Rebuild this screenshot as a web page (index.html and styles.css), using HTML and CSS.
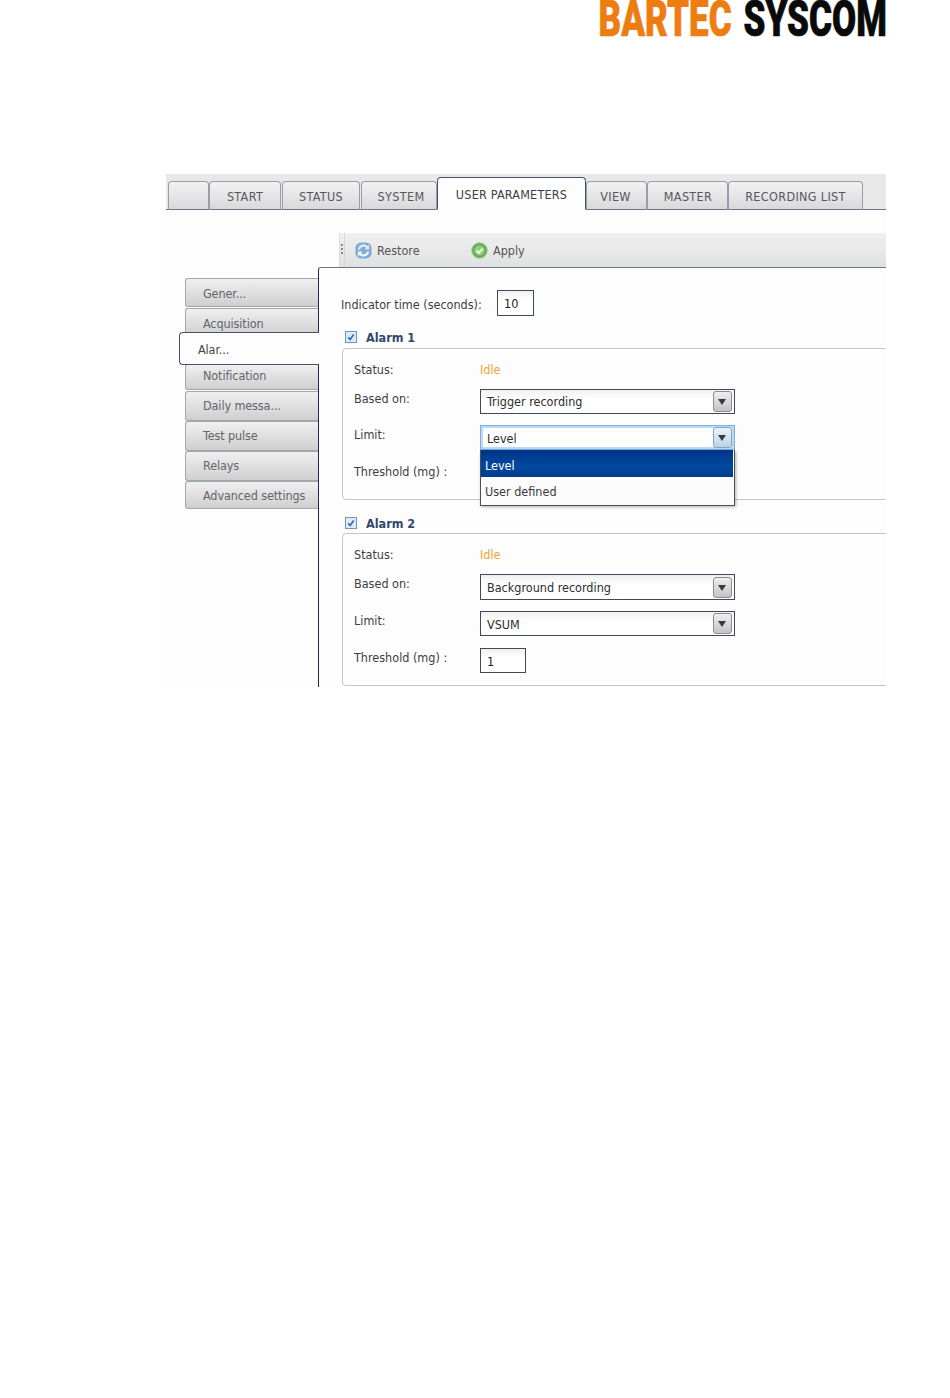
FILE: index.html
```html
<!DOCTYPE html>
<html lang="en">
<head>
<meta charset="utf-8">
<title>BARTEC SYSCOM - User parameters</title>
<link rel="stylesheet" href="styles.css">
</head>
<body>
<div class="page">
  <header class="brand"><div class="brand-text"><span class="brand-a">BARTEC</span><span class="brand-b">SYSCOM</span></div></header>
  <div class="app">
    <nav class="tabs">
      <div class="tab t-home"></div>
      <div class="tab t-start">START</div>
      <div class="tab t-status">STATUS</div>
      <div class="tab t-system">SYSTEM</div>
      <div class="tab active">USER PARAMETERS</div>
      <div class="tab t-view">VIEW</div>
      <div class="tab t-master">MASTER</div>
      <div class="tab t-list">RECORDING LIST</div>
    </nav>
    <div class="toolbar-row">
      <div class="toolbar">
        <span class="grip"></span>
        <span class="tool tool-restore">
          <svg class="tool-icon" viewBox="0 0 18 18"><rect x="0.5" y="0.5" width="17" height="17" rx="6" fill="#7ea9d2"/><path d="M3 8.2A6 6 0 0 1 13.2 4.2L15 2.6V8H9.8l1.7-1.9A3.6 3.6 0 0 0 5.4 8.2z" fill="#dfeaf5"/><path d="M15 10A6 6 0 0 1 4.8 13.8L3 15.4V10h5.2l-1.7 1.9a3.6 3.6 0 0 0 6.1-1.9z" fill="#f0f5fa"/></svg>
          Restore
        </span>
        <span class="tool tool-apply">
          <svg class="tool-icon" viewBox="0 0 18 18"><circle cx="9" cy="9" r="8.2" fill="#66ad55" stroke="#9ccb8e" stroke-width="1"/><circle cx="9" cy="9" r="5.4" fill="#93cf7c"/><path d="M5.8 9.2l2.4 2.3 4.1-4.5" fill="none" stroke="#f4fbf0" stroke-width="2"/></svg>
          Apply
        </span>
      </div>
    </div>
    <div class="workspace">
      <aside class="side">
        <div class="side-tab s-general">Gener...</div>
        <div class="side-tab s-acq">Acquisition</div>
        <div class="side-tab side-active">Alar...</div>
        <div class="side-tab s-notif">Notification</div>
        <div class="side-tab">Daily messa...</div>
        <div class="side-tab">Test pulse</div>
        <div class="side-tab">Relays</div>
        <div class="side-tab s-last">Advanced settings</div>
      </aside>
      <main class="panel">
        <div class="indicator">
          <span class="indicator-label">Indicator time (seconds):</span>
          <span class="input input-ind">10</span>
        </div>
        <section class="alarm alarm-1">
          <h2 class="alarm-title"><span class="check"><svg viewBox="0 0 12 12"><path d="M2.6 6.4l2.4 2.6 4.2-6" fill="none" stroke="#1f6fc0" stroke-width="2"/></svg></span>Alarm 1</h2>
          <div class="box">
            <div class="row row-status"><span class="label">Status:</span><span class="idle">Idle</span></div>
            <div class="row"><span class="label">Based on:</span><div class="select select-first"><span>Trigger recording</span><span class="arrow"></span></div></div>
            <div class="row limit-row">
              <span class="label">Limit:</span>
              <div class="select focused"><span>Level</span><span class="arrow"></span></div>
              <ul class="menu"><li class="menu-on">Level</li><li>User defined</li></ul>
            </div>
            <div class="row row-hidden"><span class="label">Threshold (mg) :</span></div>
          </div>
        </section>
        <section class="alarm alarm-2">
          <h2 class="alarm-title"><span class="check"><svg viewBox="0 0 12 12"><path d="M2.6 6.4l2.4 2.6 4.2-6" fill="none" stroke="#1f6fc0" stroke-width="2"/></svg></span>Alarm 2</h2>
          <div class="box box-2">
            <div class="row row-status"><span class="label">Status:</span><span class="idle">Idle</span></div>
            <div class="row"><span class="label">Based on:</span><div class="select select-tall"><span>Background recording</span><span class="arrow"></span></div></div>
            <div class="row row-wide"><span class="label">Limit:</span><div class="select"><span>VSUM</span><span class="arrow"></span></div></div>
            <div class="row"><span class="label">Threshold (mg) :</span><span class="input input-th">1</span></div>
          </div>
        </section>
      </main>
    </div>
  </div>
</div>
</body>
</html>
```
FILE: styles.css
```css
* { box-sizing: border-box; }
html, body { margin: 0; padding: 0; background: #fff; }
body { font-family: "DejaVu Sans Condensed", "DejaVu Sans", sans-serif; font-size: 12.5px; color: #333; }
.page { width: 950px; height: 1398px; overflow: hidden; }

.brand { display: flex; justify-content: flex-end; height: 174px; padding-right: 63px; }
.brand-text { display: flex; gap: 17px; height: 39px; font-family: Roboto, "Liberation Sans", sans-serif; font-weight: 900; font-size: 50px; line-height: 39px; white-space: nowrap; -webkit-text-stroke: .7px currentColor; transform: scaleX(.7); transform-origin: right top; }
.brand-a { color: #ee7d11; }
.brand-b { color: #0a0a0a; }

.app { width: 720px; height: 513px; margin-left: 166px; background: #fdfdfd; overflow: hidden; }

.tabs { display: flex; align-items: flex-end; height: 36px; padding-left: 2px; background: #e8e8e8; border-bottom: 1px solid #6d7488; }
.tab { height: 29px; margin-bottom: -1px; padding-top: 7px; text-align: center; letter-spacing: .35px; color: #55585f; border: 1px solid #9a9da5; border-bottom: 1px solid #6d7488; border-radius: 4px 4px 0 0; background: linear-gradient(#f2f2f2, #d9d9dc); line-height: 16px; }
.t-home { width: 41px; }
.t-start { width: 72px; margin-right: 1px; }
.t-status { width: 78px; margin-right: 1px; }
.t-system { width: 76px; padding-left: 4px; }
.tab.active { width: 149px; height: 33px; padding-top: 9px; letter-spacing: .2px; color: #3b3e46; background: #fdfdfd; border-color: #4a5068; border-bottom-color: #fdfdfd; }
.t-view { width: 61px; padding-right: 2px; }
.t-master { width: 81px; padding-left: 1px; }
.t-list { width: 135px; }

.toolbar-row { display: flex; justify-content: flex-end; height: 57px; padding-top: 23px; }
.toolbar { width: 547px; height: 34px; display: flex; align-items: center; padding-left: 15px; background: linear-gradient(#efefef 0, #eaeaea 45%, #dfe0e0 100%); border-left: 1px solid #dadada; position: relative; color: #555; }
.grip { position: absolute; left: 1px; top: 11px; width: 2px; height: 12px; background: repeating-linear-gradient(#8a8a8a 0 2px, transparent 2px 4px); }
.grip::after { content: ""; position: absolute; left: 3px; top: -11px; width: 1px; height: 34px; background: #d6d6d6; }
.tool { display: inline-flex; align-items: center; gap: 5px; }
.tool-restore { width: 116px; }
.tool-icon { width: 17px; height: 17px; }

.workspace { display: flex; height: 420px; }
.side { width: 152px; padding-top: 11px; flex: none; }
.side-tab { margin-left: 19px; height: 30px; padding: 6px 0 0 17px; line-height: 16px; letter-spacing: -.1px; color: #62656b; background: linear-gradient(#f0f0f0, #cfcfcf); border: 1px solid #a3a6ab; border-right: 0; border-radius: 3px 0 0 3px; }
.s-general { height: 29px; margin-bottom: 1px; padding-top: 7px; }
.s-acq { height: 28px; padding-top: 7px; }
.side-active { position: relative; z-index: 2; margin-left: 13px; margin-top: -4px; width: 140px; height: 33px; padding: 9px 0 0 18px; background: #fdfdfd; color: #444; border-color: #4a5068; border-radius: 4px 0 0 4px; }
.s-notif { height: 26px; padding-top: 3px; margin-bottom: 1px; margin-top: -1px; }
.s-last { height: 28px; }

.panel { flex: 1; min-width: 0; border-left: 1px solid #1b2a52; border-top: 1px solid #6d7488; border-top-left-radius: 3px; padding-left: 23px; color: #3d3d3d; }
.indicator { display: flex; align-items: center; height: 26px; margin-top: 22px; }
.indicator-label { width: 156px; margin-left: -1px; flex: none; padding-top: 2px; }
.input { display: block; padding-left: 6px; color: #222; border: 1px solid #3f4a5e; background: linear-gradient(#f0f0f0, #fff 35%); line-height: 25px; }
.input-ind { width: 37px; height: 26px; line-height: 26px; }
.input-th { width: 46px; height: 25px; line-height: 25px; }

.alarm-title { display: flex; align-items: center; height: 20px; margin: 0 0 0 3px; font-size: 12.5px; font-weight: 700; color: #33486c; }
.check { width: 12px; height: 12px; margin-right: 9px; background: #dfeaf5; border: 1px solid #7b93b3; display: flex; }
.check svg { width: 10px; height: 10px; }
.alarm-1 { margin-top: 11px; }
.alarm-2 { margin-top: 13px; }

.box { margin-top: 1px; width: 580px; height: 152px; padding: 11px 0 0 11px; border: 1px solid #c4c6c9; border-radius: 4px; background: #fdfdfd; }
.box-2 { height: 153px; margin-top: 0; }
.row { display: flex; align-items: flex-start; margin-bottom: 11px; position: relative; }
.row-status { height: 20px; margin-bottom: 9px; }
.row-hidden { height: 20px; }
.row-hidden .label { padding-top: 2px; }
.row-wide { margin-bottom: 12px; }
.label { width: 126px; flex: none; line-height: 18px; padding-top: 1px; }
.row-status .label { line-height: 18px; }
.idle { color: #f2a33a; line-height: 20px; }

.select { width: 255px; height: 25px; flex: none; display: flex; align-items: center; justify-content: space-between; padding: 0 2px 0 6px; color: #2c2c2c; border: 1px solid #3f4a5e; background: linear-gradient(#f1f1f1, #fff 45%); }
.select-tall { height: 26px; }
.select > span:first-child { padding-top: 1px; }
.select-first > span:first-child { padding-top: 0; }
.arrow { position: relative; width: 19px; height: 21px; border: 1px solid #8a8d92; border-radius: 3px; background: linear-gradient(#efefef, #c4c4c4); }
.arrow::after { content: ""; position: absolute; left: 4px; top: 7px; border: 4.5px solid transparent; border-top: 6px solid #3a3a3a; border-bottom: 0; }
.focused { border: 1px solid #7fb2e0; box-shadow: inset 0 0 0 2px #bcd9f3; background: #fff; }
.focused .arrow { background: linear-gradient(#eaf3fb, #bed2e4); border-color: #7fa6c8; }

.menu { position: absolute; z-index: 3; left: 126px; top: 25px; width: 255px; height: 56px; margin: 0; padding: 0; list-style: none; color: #3a3a3a; background: #fcfcfc; border: 1px solid #4a4f5a; border-top: 0; box-shadow: 1px 1px 3px rgba(0, 0, 0, .3); }
.menu li { height: 27px; padding-left: 4px; line-height: 30px; }
.menu .menu-on { width: 252px; color: #fff; line-height: 32px; background: linear-gradient(#00338a, #004a9e 60%, #003c8e); }
```
